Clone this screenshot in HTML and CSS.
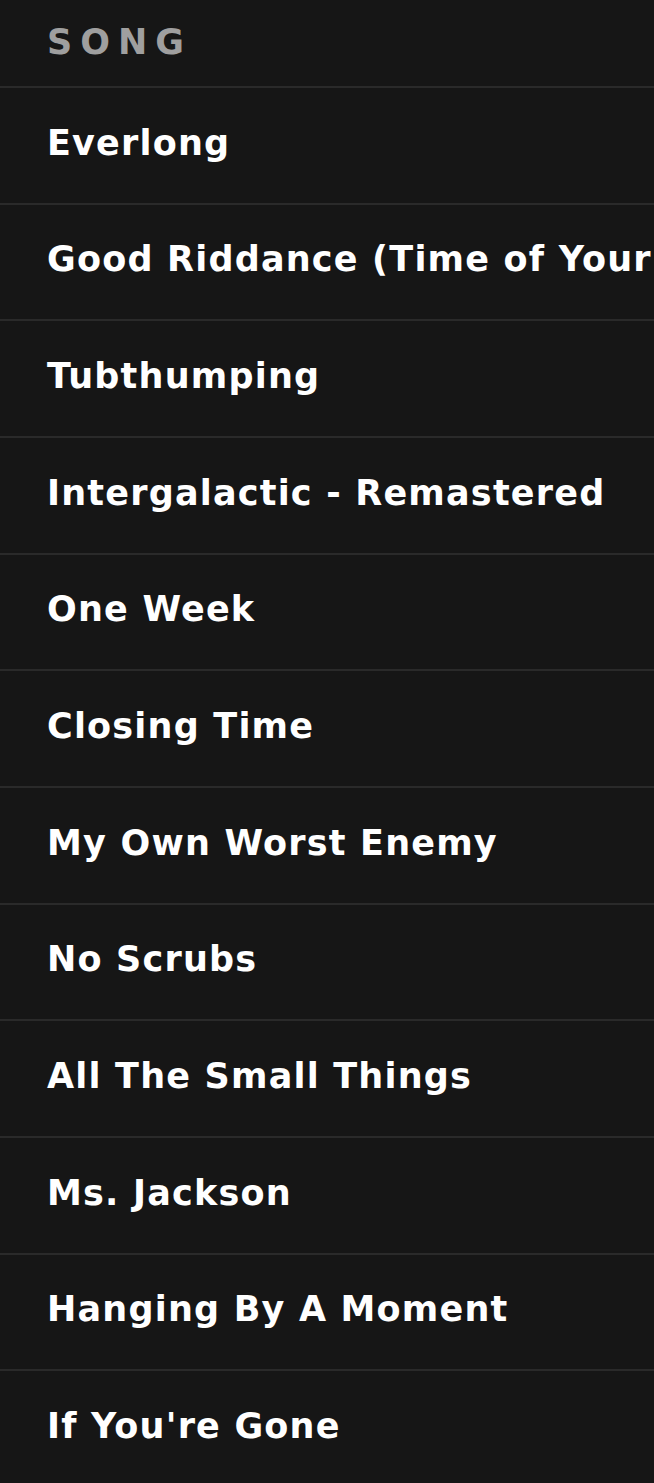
FILE: index.html
```html
<!DOCTYPE html>
<html lang="en">
<head>
    <meta charset="utf-8">
    <title>Songs</title>
    <meta name="viewport" content="width=device-width, initial-scale=1">
    <link rel="stylesheet" href="styles.css">
</head>
<body>
<div class="tracklist">
    <div class="tracklist-head">Song</div>
    <ul class="tracks">
        <li class="track">Everlong</li>
        <li class="track">Good Riddance (Time of Your Life)</li>
        <li class="track">Tubthumping</li>
        <li class="track">Intergalactic - Remastered</li>
        <li class="track">One Week</li>
        <li class="track">Closing Time</li>
        <li class="track">My Own Worst Enemy</li>
        <li class="track">No Scrubs</li>
        <li class="track">All The Small Things</li>
        <li class="track">Ms. Jackson</li>
        <li class="track">Hanging By A Moment</li>
        <li class="track">If You're Gone</li>
    </ul>
</div>
</body>
</html>
```

FILE: styles.css
```css
html, body {
    margin: 0;
    background: #161616;
}

body {
    font: 700 35px 'DejaVu Sans', Inter, sans-serif;
    color: #fff;
    overflow: hidden;
}

.tracklist {
    width: 100%;
}

.tracklist-head {
    height: 88px;
    box-sizing: border-box;
    padding: 0 0 2px 47px;
    display: flex;
    align-items: center;
    color: #9f9f9f;
    font-size: 35px;
    letter-spacing: 8px;
    text-transform: uppercase;
    border-bottom: 2px solid #2a2a2a;
}

.tracks {
    list-style: none;
    margin: 0;
    padding: 0;
}

.track {
    height: 116.67px;
    box-sizing: border-box;
    padding: 0 0 5px 47px;
    display: flex;
    align-items: center;
    white-space: nowrap;
    overflow: hidden;
    letter-spacing: 1.2px;
    border-bottom: 2px solid #2a2a2a;
}
```
